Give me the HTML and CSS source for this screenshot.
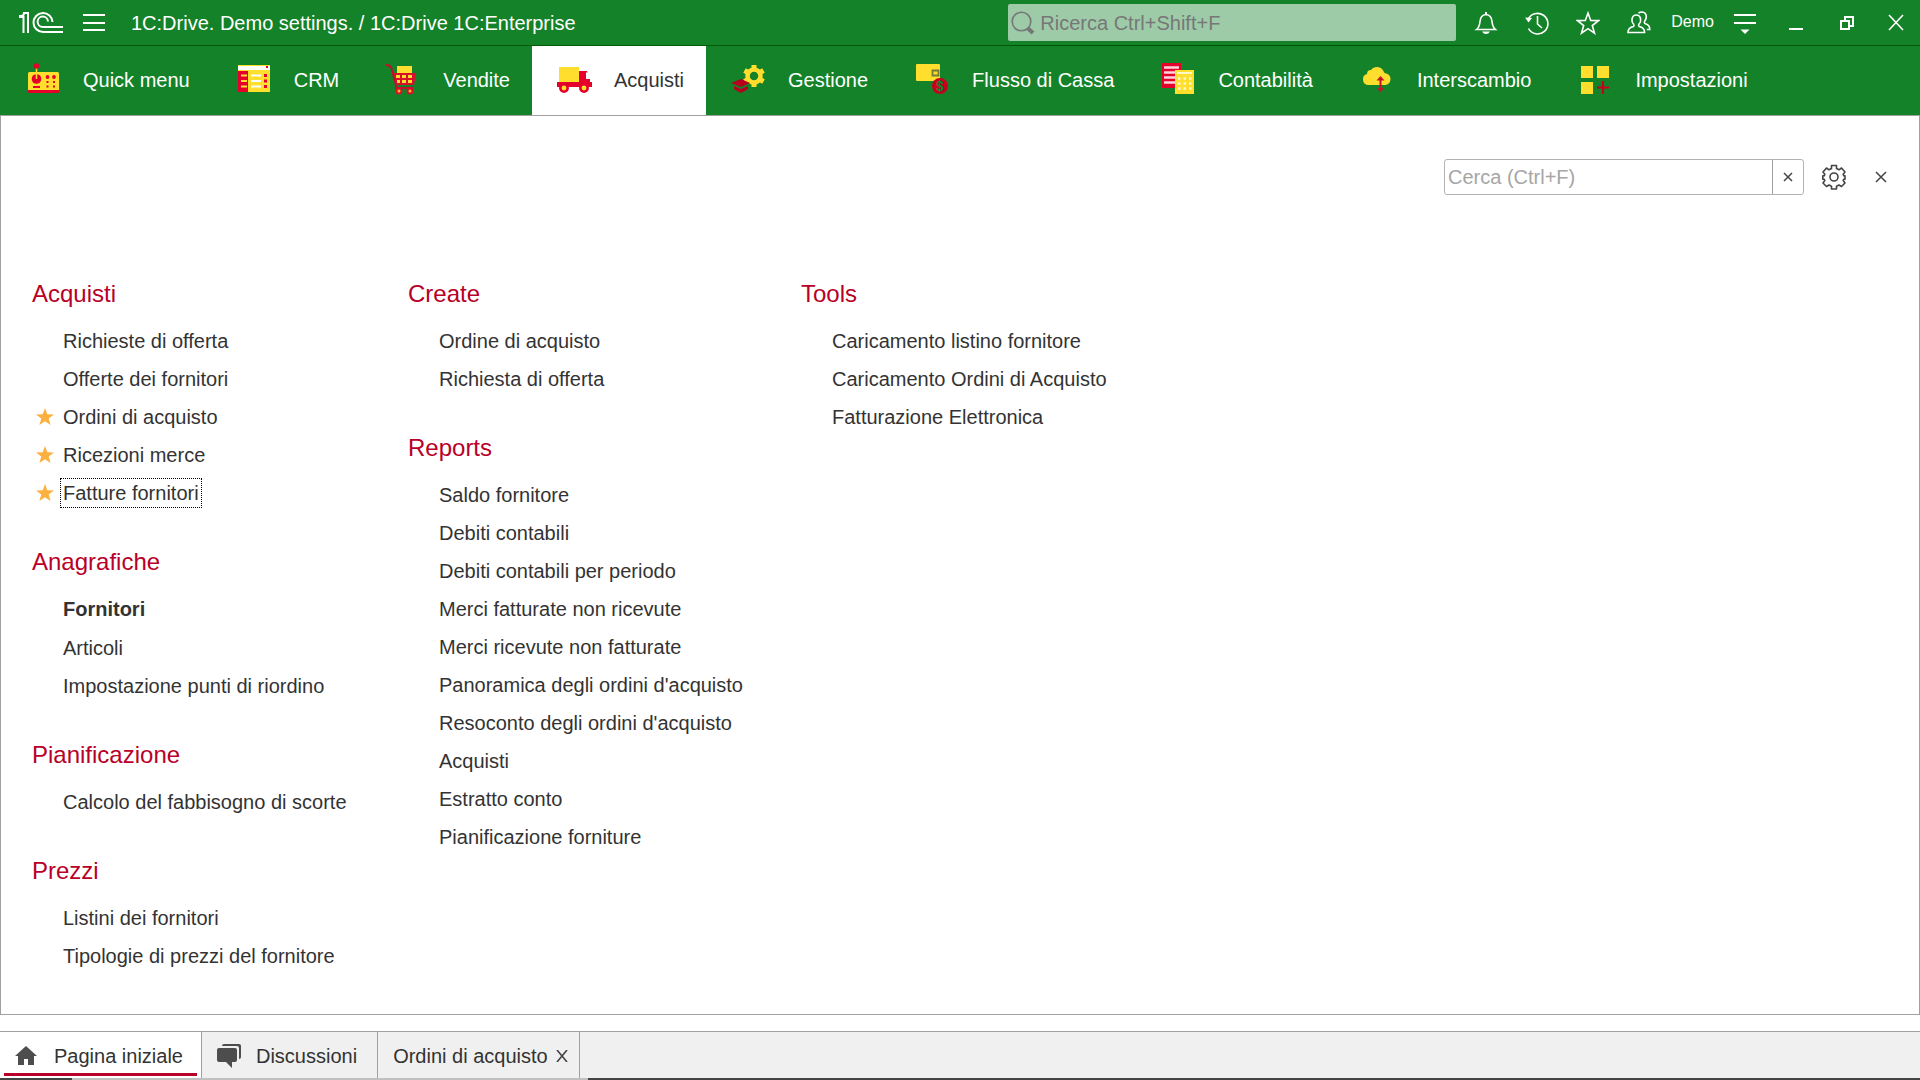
FILE: index.html
```html
<!DOCTYPE html>
<html lang="it">
<head>
<meta charset="utf-8">
<title>1C:Drive</title>
<link rel="stylesheet" href="styles.css">
</head>
<body>
<header class="titlebar">
  <svg class="logo" width="44" height="24" viewBox="0 0 44 24" fill="none" stroke="#fff" stroke-width="2">
    <path d="M0 5h2q3 0 3-3h4v20M0 6h4.500v16"/>
    <path d="M44 21H24a9.500 9.500 0 1 1 9.500-10"/>
    <path d="M44 16H24a5.200 5.200 0 1 1 5-5.500"/>
  </svg>
  <button class="menu-button" aria-label="Menu">
    <svg width="22" height="20" viewBox="0 0 22 20" stroke="#fff" stroke-width="2"><path d="M0 2h22M0 10h22M0 17h22"/></svg>
  </button>
  <h1 class="title">1C:Drive. Demo settings. / 1C:Drive 1C:Enterprise</h1>
  <label class="global-search">
    <svg width="24" height="24" viewBox="0 0 24 24" fill="none" stroke="#777"><circle cx="10.500" cy="10.500" r="9.300" stroke-width="1.600"/><path d="M16.500 17l5.500 5" stroke-width="4"/></svg>
    <input type="text" placeholder="Ricerca Ctrl+Shift+F" aria-label="Ricerca">
  </label>
  <button class="tool" aria-label="Notifiche">
    <svg width="24" height="24" viewBox="0 0 24 24" fill="none" stroke="#fff" stroke-width="1.600"><path d="M2.500 18.500Q5.500 16 6 10.500Q6.500 4 12 3.500Q17.500 4 18 10.500Q18.500 16 21.500 18.500Z"/><path d="M12 1v3" stroke-width="2"/><path d="M8 20.500h8q-1.500 2.500-4 2.500t-4-2.500z" fill="#fff" stroke="none"/></svg>
  </button>
  <button class="tool" aria-label="Cronologia">
    <svg width="24" height="24" viewBox="0 0 24 24" fill="none" stroke="#fff" stroke-width="1.600"><path d="M3 9A10.300 10.300 0 1 1 3.500 17.500"/><path d="M12.500 5v8l4.500 4"/><path d="M0 6.500l7 .5-3.500 4.500z" fill="#fff" stroke="none"/></svg>
  </button>
  <button class="tool" aria-label="Preferiti">
    <svg width="24" height="24" viewBox="0 0 24 24" fill="none" stroke="#fff" stroke-width="1.600"><path d="M12 2l2.700 7.400 7.800.2-6.200 4.900 2.200 7.700L12 17.700l-6.500 4.500 2.200-7.700L1.500 9.600l7.800-.2z"/></svg>
  </button>
  <button class="tool" aria-label="Utenti">
    <svg width="24" height="24" viewBox="0 0 24 24" fill="none" stroke="#fff" stroke-width="1.600"><path d="M1 21.500q0-5 5.500-6 1-1 0-2.500-2-2-1.500-5 .7-4 4.300-4t4.300 4q.5 3-1.500 5-1 1.500 0 2.500 5.500 1 5.500 6z"/><path d="M11.500 2q1.500-1 3.500-1 3.700.3 4.300 4 .3 3-1.500 5-1 1.500 0 2.500 5 1.200 5 6h-3"/></svg>
  </button>
  <a class="user" href="#">Demo</a>
  <button class="tool" aria-label="Servizio">
    <svg width="24" height="24" viewBox="0 0 24 24"><path d="M1 4h22M1 12h22" stroke="#fff" stroke-width="2"/><path d="M7.500 18.500h9L12 23z" fill="#fff"/></svg>
  </button>
  <button class="tool" aria-label="Riduci">
    <svg width="24" height="24" viewBox="0 0 24 24"><path d="M5 18h14" stroke="#fff" stroke-width="2"/></svg>
  </button>
  <button class="tool" aria-label="Ripristina">
    <svg width="24" height="24" viewBox="0 0 24 24" fill="none" stroke="#fff" stroke-width="2"><path d="M6 10h8v8H6z"/><path d="M10 9V6h8v9h-3"/></svg>
  </button>
  <button class="tool tool-last" aria-label="Chiudi finestra">
    <svg width="24" height="24" viewBox="0 0 24 24" stroke="#fff" stroke-width="1.600"><path d="M5 4l14 15M19 4L5 19"/></svg>
  </button>
</header>

<nav class="sections">
  <a class="section" href="#">
    <svg width="40" height="40" viewBox="0 0 40 40"><path d="M15.500 6v8" stroke="#ffde2e" stroke-width="1.500"/><rect x="7" y="12" width="31" height="20" rx="1.500" fill="#ffde2e"/><path d="M7 30h31v1.500q0 1.500-1.500 1.500h-28Q7 33 7 31.500z" fill="#e4002b"/><g fill="#e4002b"><circle cx="15.500" cy="6" r="2.700"/><circle cx="15.500" cy="19" r="4.800"/><path d="M12 26h7v2h-7z"/><circle cx="26.500" cy="17" r="1.900"/><circle cx="33" cy="17" r="1.900"/><path d="M25.500 21h2v2h-2zM32 21h2v2h-2zM25.500 25.500h2v2h-2zM32 25.500h2v2h-2z"/></g><path d="M15.500 14v5" stroke="#ffde2e" stroke-width="1.500"/></svg>
    <span>Quick menu</span>
  </a>
  <a class="section" href="#">
    <svg width="40" height="40" viewBox="0 0 40 40"><path d="M6 5h32v27H6z" fill="#ffde2e"/><path d="M6 6h32v4H6z" fill="#fff"/><path d="M6 11h10v21H6z" fill="#e4002b"/><path d="M9 15.500h6M9 21h6M9 26.500h6" stroke="#ffde2e" stroke-width="2"/><path d="M19 15.500h10M19 21h10M19 26.500h10" stroke="#fff" stroke-width="2"/><path d="M32 14h3v3h-3zM32 19.500h3v3h-3zM32 25h3v3h-3zM34 6h2v2h-2z" fill="#e4002b"/></svg>
    <span>CRM</span>
  </a>
  <a class="section" href="#">
    <svg width="40" height="40" viewBox="0 0 40 40"><path d="M16 6h15v8H16z" fill="#ffde2e"/><path d="M12 13h23l-2 12H15z" fill="#d8102c"/><path d="M5 5q5 0 6 5l4 15q0 3-1 3h18" fill="none" stroke="#c0102a" stroke-width="2"/><path d="M15 15h4v3h-4zM21 15h4v3h-4zM27 15h4v3h-4zM16 20h3v3h-3zM21 20h4v3h-4zM27 20h4v3h-4z" fill="#ffde2e"/><g fill="#ffb52e" stroke="#d8102c" stroke-width="2"><circle cx="18" cy="31" r="2.500"/><circle cx="29" cy="31" r="2.500"/></g></svg>
    <span>Vendite</span>
  </a>
  <a class="section section-active" href="#" aria-current="page">
    <svg width="40" height="40" viewBox="0 0 40 40"><path d="M7 7h20v15H7z" fill="#ffde2e"/><path d="M27 11h8l3 8v3h2v5H5v-5h22z" fill="#e4002b"/><path d="M34 12.500h2l2.500 6.500H34z" fill="#fff"/><g fill="#ffde2e" stroke="#e4002b" stroke-width="2.500"><circle cx="12" cy="28" r="3.700"/><circle cx="32" cy="28" r="3.700"/></g></svg>
    <span>Acquisti</span>
  </a>
  <a class="section" href="#">
    <svg width="40" height="40" viewBox="0 0 40 40"><circle cx="28" cy="16" r="6.500" fill="none" stroke="#ffde2e" stroke-width="4.500"/><path d="M28 5v4M28 23v4M18.500 10.500l3.500 2M34 19.500l3.500 2M18.500 21.500l3.500-2M34 12.500l3.500-2" stroke="#ffde2e" stroke-width="5"/><path d="M5 23l10-4 9 4-9 4z" fill="#b5001e"/><path d="M8 26l7 3 7-3v3l-7 4-7-4z" fill="#b5001e"/></svg>
    <span>Gestione</span>
  </a>
  <a class="section" href="#">
    <svg width="40" height="40" viewBox="0 0 40 40"><rect x="6" y="4" width="24" height="17" rx="1" fill="#ffde2e"/><path d="M22.500 10.500h6v5h-6z" fill="#ffde2e" stroke="#777a35" stroke-width="1.800"/><circle cx="30" cy="26" r="8" fill="#c80020"/><text x="30" y="31" text-anchor="middle" class="coin-sign">$</text></svg>
    <span>Flusso di Cassa</span>
  </a>
  <a class="section" href="#">
    <svg width="40" height="40" viewBox="0 0 40 40"><path d="M6 3h19v25H6z" fill="#e4002b"/><path d="M8 7.500h15M8 12.500h15M8 17.500h12M8 22.500h12" stroke="#fbd3da" stroke-width="2.500"/><path d="M19 10h19v24H19z" fill="#ffde2e"/><path d="M21 13h15" stroke="#fff7c8" stroke-width="2"/><path d="M22 18.500h14M22 23.500h14M22 28.500h14" stroke="#fff7c8" stroke-width="2.500" stroke-dasharray="2.500 3"/></svg>
    <span>Contabilità</span>
  </a>
  <a class="section" href="#">
    <svg width="40" height="40" viewBox="0 0 40 40"><path d="M14 25q-6 0-6-6 0-4 4-5 0-4 4-4 2-3 6.500-3t7 6q6 1 6 6t-5 6z" fill="#ffde2e"/><path d="M25.500 19v10" stroke="#c8102a" stroke-width="2"/><path d="M21.500 20.500l4-4.500 4 4.500zM22 28h7l-3.500 4z" fill="#c8102a"/></svg>
    <span>Interscambio</span>
  </a>
  <a class="section" href="#">
    <svg width="40" height="40" viewBox="0 0 40 40"><path d="M8 6h12v12H8zM24 6h12v12H24zM8 22h12v12H8z" fill="#ffde2e"/><path d="M30 21v13M24 27.500h12" stroke="#c8001e" stroke-width="2"/></svg>
    <span>Impostazioni</span>
  </a>
</nav>

<main class="panel">
  <div class="panel-tools">
    <div class="find">
      <input type="text" placeholder="Cerca (Ctrl+F)" aria-label="Cerca">
      <button class="find-clear" aria-label="Cancella"><svg width="10" height="10" viewBox="0 0 10 10" stroke="#444" stroke-width="1.500"><path d="M1 1l8 8M9 1L1 9"/></svg></button>
    </div>
    <button class="icon-button" aria-label="Impostazioni">
      <svg width="26" height="26" viewBox="0 0 26 26" fill="none" stroke="#444" stroke-width="1.600" stroke-linejoin="round"><circle cx="13" cy="13" r="4"/><path d="M10.500 4.500V1.500h5v3l2.500 1.300L20.500 4l3.500 4-1.800 2.300.5 1.400H24v3.600h-1.300l-.5 1.200L24 19l-3.500 3.500-2.500-1.500-2.500 1.300v2.700h-5v-2.700L8 21l-2.500 1.500L2 19l1.800-2.500-.5-1.200H1.800v-3.600h1.500l.5-1.400L2 8l3.500-4L8 5.800z"/></svg>
    </button>
    <button class="icon-button panel-close" aria-label="Chiudi"><svg width="12" height="12" viewBox="0 0 12 12" stroke="#444" stroke-width="1.500"><path d="M1 1l10 10M11 1L1 11"/></svg></button>
  </div>

  <div class="columns">
    <div class="column">
      <section class="group">
        <h2>Acquisti</h2>
        <ul>
          <li><a href="#">Richieste di offerta</a></li>
          <li><a href="#">Offerte dei fornitori</a></li>
          <li class="starred"><svg width="18" height="18" viewBox="0 0 18 18"><path d="M9 0l2.300 6.200 6.700.2-5.300 4 1.900 6.600L9 13.200 3.400 17l1.900-6.600-5.300-4 6.700-.2z" fill="#fbb040"/></svg><a href="#">Ordini di acquisto</a></li>
          <li class="starred"><svg width="18" height="18" viewBox="0 0 18 18"><path d="M9 0l2.300 6.200 6.700.2-5.300 4 1.900 6.600L9 13.200 3.400 17l1.900-6.600-5.300-4 6.700-.2z" fill="#fbb040"/></svg><a href="#">Ricezioni merce</a></li>
          <li class="starred"><svg width="18" height="18" viewBox="0 0 18 18"><path d="M9 0l2.300 6.200 6.700.2-5.300 4 1.900 6.600L9 13.200 3.400 17l1.900-6.600-5.300-4 6.700-.2z" fill="#fbb040"/></svg><a class="focused" href="#">Fatture fornitori</a></li>
        </ul>
      </section>
      <section class="group">
        <h2>Anagrafiche</h2>
        <ul>
          <li class="important"><a href="#">Fornitori</a></li>
          <li><a href="#">Articoli</a></li>
          <li><a href="#">Impostazione punti di riordino</a></li>
        </ul>
      </section>
      <section class="group">
        <h2>Pianificazione</h2>
        <ul>
          <li><a href="#">Calcolo del fabbisogno di scorte</a></li>
        </ul>
      </section>
      <section class="group">
        <h2>Prezzi</h2>
        <ul>
          <li><a href="#">Listini dei fornitori</a></li>
          <li><a href="#">Tipologie di prezzi del fornitore</a></li>
        </ul>
      </section>
    </div>
    <div class="column">
      <section class="group">
        <h2>Create</h2>
        <ul>
          <li><a href="#">Ordine di acquisto</a></li>
          <li><a href="#">Richiesta di offerta</a></li>
        </ul>
      </section>
      <section class="group">
        <h2>Reports</h2>
        <ul>
          <li><a href="#">Saldo fornitore</a></li>
          <li><a href="#">Debiti contabili</a></li>
          <li><a href="#">Debiti contabili per periodo</a></li>
          <li><a href="#">Merci fatturate non ricevute</a></li>
          <li><a href="#">Merci ricevute non fatturate</a></li>
          <li><a href="#">Panoramica degli ordini d'acquisto</a></li>
          <li><a href="#">Resoconto degli ordini d'acquisto</a></li>
          <li><a href="#">Acquisti</a></li>
          <li><a href="#">Estratto conto</a></li>
          <li><a href="#">Pianificazione forniture</a></li>
        </ul>
      </section>
    </div>
    <div class="column">
      <section class="group">
        <h2>Tools</h2>
        <ul>
          <li><a href="#">Caricamento listino fornitore</a></li>
          <li><a href="#">Caricamento Ordini di Acquisto</a></li>
          <li><a href="#">Fatturazione Elettronica</a></li>
        </ul>
      </section>
    </div>
  </div>
</main>

<footer class="windows">
  <div class="window window-active">
    <a href="#"><svg width="24" height="24" viewBox="0 0 24 24" fill="#4d4d4d"><path d="M12 2l11 10h-3v9h-6v-6h-4v6H4v-9H1z"/></svg><span>Pagina iniziale</span></a>
  </div>
  <div class="window">
    <a href="#"><svg width="24" height="24" viewBox="0 0 24 24" fill="#4d4d4d"><path d="M5 2q0-2 2-2h15q2 0 2 2v11q0 2-2 2V4q0-2-2-2z"/><path d="M2 4h16q2 0 2 2v10q0 2-2 2h-3v6l-6-6H2q-2 0-2-2V6q0-2 2-2z"/></svg><span>Discussioni</span></a>
  </div>
  <div class="window">
    <a href="#"><span>Ordini di acquisto</span></a>
    <button class="window-close" aria-label="Chiudi scheda"><svg width="12" height="12" viewBox="0 0 12 12" stroke="#444" stroke-width="1.600"><path d="M1 0l10 12M11 0L1 12"/></svg></button>
  </div>
</footer>
<div class="edge"><span class="edge-dark edge-start"></span><span class="edge-light"></span><span class="edge-dark edge-rest"></span></div>
</body>
</html>
```
FILE: styles.css
```css
* {
  box-sizing: border-box;
}

body {
  margin: 0;
  min-height: 100vh;
  display: flex;
  flex-direction: column;
  background: #fff;
  color: #333;
  font: 20px/24px "Liberation Sans", Arial, sans-serif;
}

a {
  color: inherit;
  text-decoration: none;
}

button {
  display: flex;
  align-items: center;
  justify-content: center;
  padding: 0;
  border: 0;
  background: none;
}

input {
  min-width: 0;
  flex: 1;
  padding: 0;
  border: 0;
  outline: 0;
  background: none;
  color: #333;
  font: inherit;
}

svg {
  display: block;
  flex: none;
}

/* Title bar */
.titlebar {
  display: flex;
  align-items: center;
  height: 45px;
  padding-left: 19px;
  background: #148228;
  color: #fff;
}

.menu-button {
  width: 22px;
  margin: 0 26px 0 20px;
}

.title {
  flex: 1;
  margin: 0;
  font-size: 20px;
  font-weight: 400;
}

.global-search {
  display: flex;
  align-items: center;
  gap: 5px;
  width: 448px;
  height: 37px;
  margin-right: 4px;
  padding: 0 3px;
  border-radius: 2px;
  background: #9dcba7;
}

.global-search input::placeholder {
  color: #777;
  opacity: 1;
}

.tool {
  width: 51px;
  height: 44px;
}

.tool-last {
  width: 48px;
}

.user {
  padding: 0 5px 2px 7px;
  font-size: 16px;
}

/* Sections */
.sections {
  display: flex;
  height: 70px;
  padding-left: 1px;
  border-top: 1px solid #005a00;
  background: #148228;
  color: #fff;
}

.section {
  display: flex;
  align-items: center;
  gap: 22px;
  padding: 0 22px 2px 20px;
}

.section-active {
  background: #fff;
  color: #333;
}

.coin-sign {
  fill: #148228;
  font-size: 14px;
  font-weight: 700;
}

/* Function panel */
.panel {
  flex: 1;
  padding: 43px 21px 36px 31px;
  border: 1px solid #a0a0a0;
}

.panel-tools {
  display: flex;
  justify-content: flex-end;
  gap: 16px;
}

.find {
  display: flex;
  width: 360px;
  height: 36px;
  border: 1px solid #b3b3b3;
  border-radius: 3px;
}

.find input {
  padding-left: 3px;
}

.find input::placeholder {
  color: #a6a6a6;
  opacity: 1;
}

.find-clear {
  width: 31px;
  border-left: 1px solid #a0a0a0;
}

.icon-button {
  width: 28px;
}

.panel-close {
  width: 34px;
}

.columns {
  display: grid;
  grid-template-columns: 376px 393px 1fr;
  margin-top: 85px;
}

.column {
  display: flex;
  flex-direction: column;
  gap: 36px;
}

.group h2 {
  margin: 0 0 14px;
  color: #b80028;
  font-size: 24px;
  font-weight: 400;
  line-height: 28px;
}

.group ul {
  margin: 0;
  padding: 0;
  list-style: none;
}

.group li {
  display: flex;
  align-items: center;
  height: 38px;
  padding-left: 31px;
}

.group .starred {
  gap: 9px;
  padding-left: 4px;
}

.group .important {
  height: 39px;
  padding-bottom: 1px;
  font-weight: 700;
}

.group .focused {
  margin: 0 -3px;
  padding: 2px;
  border: 1px dotted #000;
}

/* Open windows */
.windows {
  display: flex;
  height: 47px;
  margin-top: 16px;
  border-top: 1px solid #a0a0a0;
  background: #f0f0f0;
}

.window {
  display: flex;
  align-items: center;
  gap: 8px;
  padding: 2px 11px 0 15px;
  border-right: 1px solid #a0a0a0;
}

.window a {
  display: flex;
  align-items: center;
  gap: 15px;
  padding-right: 9px;
}

.window a:not(:last-child) {
  padding-right: 0;
}

.window-active {
  background: linear-gradient(#b80028, #b80028) 4px 41px / calc(100% - 8px) 3px no-repeat #fff;
}

.window-active a {
  gap: 16px;
  padding-right: 7px;
}

.windows .window-active {
  padding-left: 14px;
}

.edge {
  display: flex;
  height: 2px;
}

.edge-dark {
  background: #444;
}

.edge-light {
  width: 516px;
  background: #c0c0c0;
}

.edge-start {
  width: 72px;
}

.edge-rest {
  flex: 1;
}
```
